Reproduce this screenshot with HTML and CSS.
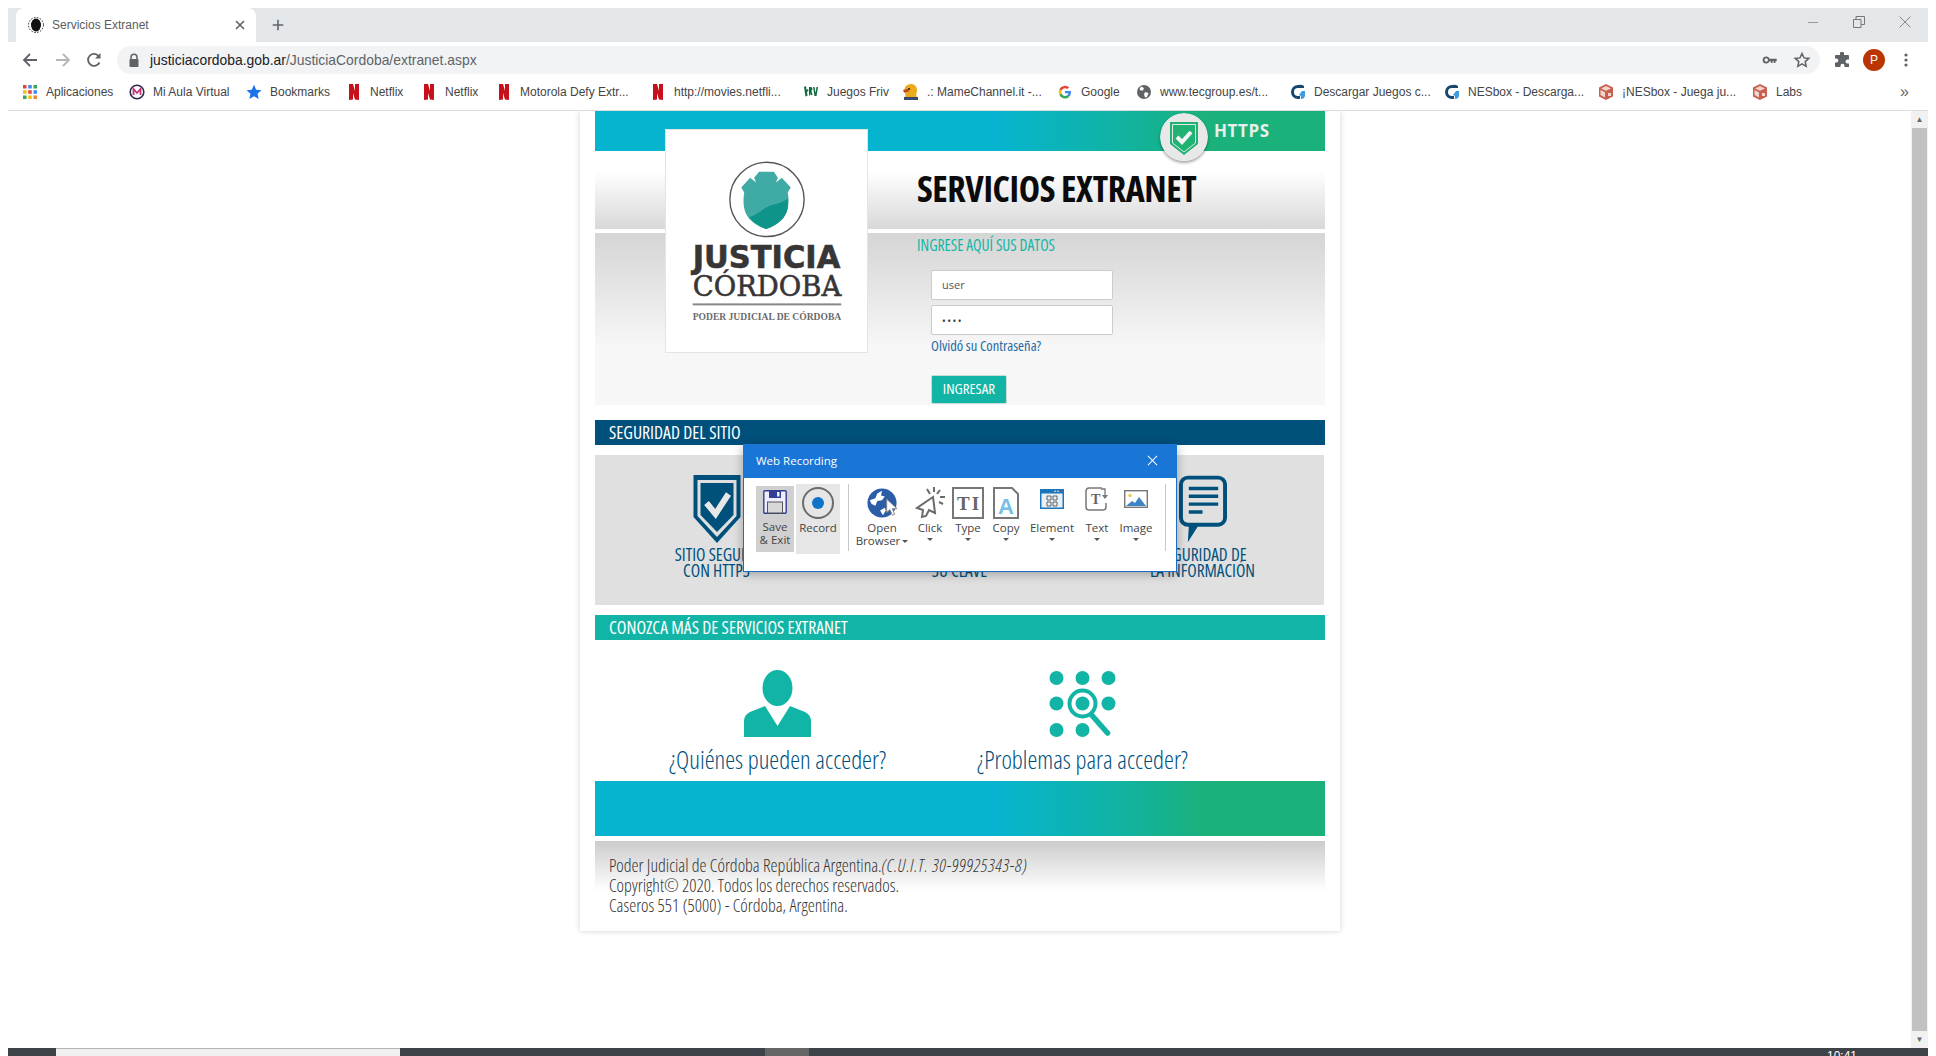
FILE: index.html
```html
<!DOCTYPE html>
<html lang="en">
<head>
    <meta charset="UTF-8">
    <title>Servicios Extranet</title>
    <link rel="stylesheet" href="styles.css">
</head>
<body>
    <svg class="defs" width="0" height="0">
        <symbol id="nflx" viewBox="0 0 16 16"><path fill="#c8101a" d="M3 0h4l2 7V0h4v16l-4-.5L7 9v6.5L3 16z"/></symbol>
        <symbol id="cube" viewBox="0 0 16 16"><path fill="#c9604f" d="M8 0l7 3.5v9L8 16l-7-3.5v-9z"/><path fill="#f2d5cc" d="M8 2l5 2.4-5 2.4-5-2.4zM2.5 6l4.5 2.2v5.3L2.5 11zM10 9h3v3h-3z"/></symbol>
        <symbol id="nes" viewBox="0 0 16 16"><path fill="#17476f" d="M8 1a7 7 0 0 0 0 14h2v-3H8a4 4 0 0 1 0-8h6V2a7 7 0 0 0-6-1z"/><path fill="#3d9be0" d="M15 7v5a4 4 0 0 1-4 3v-3l-2-1 3-4z"/></symbol>
    </svg>

    <div class="tabstrip">
        <div class="tab">
            <svg class="favicon" viewBox="0 0 16 16"><circle cx="8" cy="8" r="7.5" fill="none" stroke="#222" stroke-dasharray="1.5 1.5"/><ellipse cx="8" cy="8" rx="5" ry="6.5" fill="#111"/></svg>
            <span class="tab-title">Servicios Extranet</span>
            <svg class="tab-close" viewBox="0 0 10 10"><path d="M1 1l8 8M9 1l-8 8" stroke="#5f6368" stroke-width="1.6"/></svg>
        </div>
        <svg class="new-tab" viewBox="0 0 16 16"><path d="M8 2v12M2 8h12" stroke="#5f6368" stroke-width="1.8"/></svg>
        <div class="win-controls">
            <div class="win-btn"><svg viewBox="0 0 12 12"><path d="M1 6.5h10" stroke="#999" stroke-width="1"/></svg></div>
            <div class="win-btn"><svg viewBox="0 0 12 12"><path d="M.5 3.5h7.500v8h-7.500zM3 3.500v-3h8.500v8h-3.500" fill="none" stroke="#777" stroke-width="1"/></svg></div>
            <div class="win-btn"><svg viewBox="0 0 12 12"><path d="M.5.5l11 11M11.500.5l-11 11" stroke="#888" stroke-width="1"/></svg></div>
        </div>
    </div>

    <div class="toolbar">
        <div class="nav-btn"><svg viewBox="0 0 16 16"><path d="M15 8H2M8 2L2 8l6 6" fill="none" stroke="#5f6368" stroke-width="1.800"/></svg></div>
        <div class="nav-btn"><svg viewBox="0 0 16 16"><path d="M1 8h13M8 2l6 6-6 6" fill="none" stroke="#b4b6b9" stroke-width="1.800"/></svg></div>
        <div class="nav-btn"><svg viewBox="0 0 16 16"><path d="M13.500 10.500A6 6 0 1 1 13 4.500" fill="none" stroke="#5f6368" stroke-width="1.800"/><path d="M14.500 1v5.500H9z" fill="#5f6368"/></svg></div>
        <div class="omnibox">
            <svg class="lock" viewBox="0 0 14 14"><path d="M4 6V4.200a3 3 0 0 1 6 0V6" fill="none" stroke="#5f6368" stroke-width="1.500"/><rect x="2.500" y="6" width="9" height="8" rx="1" fill="#5f6368"/></svg>
            <span class="url"><span class="url-host">justiciacordoba.gob.ar</span>/JusticiaCordoba/extranet.aspx</span>
            <div class="omni-icons">
                <svg class="key-icon" viewBox="0 0 18 12"><circle cx="4.500" cy="6" r="3.200" fill="none" stroke="#5f6368" stroke-width="2.200"/><path d="M8 4.500h9v3h-1.500v2h-2v-2H12v2h-2v-2H8z" fill="#5f6368"/></svg>
                <svg viewBox="0 0 16 16"><path d="M8 1.500l2 4.400 4.800.5-3.600 3.200 1 4.700L8 11.900l-4.200 2.400 1-4.700L1.200 6.400 6 5.900z" fill="none" stroke="#5f6368" stroke-width="1.500"/></svg>
            </div>
        </div>
        <div class="tool-btn"><svg viewBox="0 0 16 16"><path fill="#5f6368" d="M6 1.500a2 2 0 0 1 4 0V3h4a1 1 0 0 1 1 1v3.500h-1.500a2 2 0 0 0 0 4H15V15H10.500v-1.300a2 2 0 0 0-4 0V15H2a1 1 0 0 1-1-1v-3.500h1.300a2 2 0 0 0 0-4H1V4a1 1 0 0 1 1-1h4z"/></svg></div>
        <div class="tool-btn"><span class="avatar">P</span></div>
        <div class="tool-btn"><svg viewBox="0 0 16 16"><circle cx="8" cy="3" r="1.600" fill="#5f6368"/><circle cx="8" cy="8" r="1.600" fill="#5f6368"/><circle cx="8" cy="13" r="1.600" fill="#5f6368"/></svg></div>
    </div>

    <div class="bookmarks">
        <div class="bm">
            <svg viewBox="0 0 16 16"><g><rect x="1" y="1" width="3.500" height="3.500" fill="#ea4335"/><rect x="6.250" y="1" width="3.500" height="3.500" fill="#4285f4"/><rect x="11.500" y="1" width="3.500" height="3.500" fill="#34a853"/><rect x="1" y="6.250" width="3.500" height="3.500" fill="#fbbc05"/><rect x="6.250" y="6.250" width="3.500" height="3.500" fill="#ea4335"/><rect x="11.500" y="6.250" width="3.500" height="3.500" fill="#4285f4"/><rect x="1" y="11.500" width="3.500" height="3.500" fill="#34a853"/><rect x="6.250" y="11.500" width="3.500" height="3.500" fill="#fbbc05"/><rect x="11.500" y="11.500" width="3.500" height="3.500" fill="#ea8a35"/></g></svg>
            <span>Aplicaciones</span>
        </div>
        <div class="bm">
            <svg viewBox="0 0 16 16"><circle cx="8" cy="8" r="6.800" fill="#fff" stroke="#2c2c4a" stroke-width="1.600"/><path d="M4.500 11V5l3.500 4 3.500-4v6" fill="none" stroke="#c2357a" stroke-width="1.800"/></svg>
            <span>Mi Aula Virtual</span>
        </div>
        <div class="bm">
            <svg viewBox="0 0 16 16"><path fill="#1a73e8" d="M8 .8l2.200 4.900 5.300.6-4 3.500 1.200 5.300L8 12.300l-4.700 2.800 1.200-5.300-4-3.500 5.300-.6z"/></svg>
            <span>Bookmarks</span>
        </div>
        <div class="bm"><svg viewBox="0 0 16 16"><use href="#nflx"/></svg><span>Netflix</span></div>
        <div class="bm"><svg viewBox="0 0 16 16"><use href="#nflx"/></svg><span>Netflix</span></div>
        <div class="bm"><svg viewBox="0 0 16 16"><use href="#nflx"/></svg><span>Motorola Defy Extr...</span></div>
        <div class="bm"><svg viewBox="0 0 16 16"><use href="#nflx"/></svg><span>http://movies.netfli...</span></div>
        <div class="bm">
            <svg viewBox="0 0 16 16"><path d="M1 3l2-1 .5 4L5 5l.5 2-1.500.8.500 4-2 .7zM6 3h2.500l1 2-1 2 1 4H7.500L7 8v3.500H6zM10 3h1.500l1 6 1-6H15l-1.500 9h-2z" fill="#0d6b3b"/></svg>
            <span>Juegos Friv</span>
        </div>
        <div class="bm">
            <svg viewBox="0 0 16 16"><path fill="#eba91c" d="M8 0c3.500 0 6 2.500 6 6 0 2-.5 3.500-1 4.500l1 3H2l.5-3C1 8 1 5.500 2 3.500 3 1.500 5.500 0 8 0z"/><path fill="#3a4a70" d="M1 13h14v3H1z"/><circle cx="6" cy="5" r="1.100" fill="#222"/><path fill="#c8401a" d="M0 6l5-1 1 2.500-5 1z"/></svg>
            <span>.: MameChannel.it -...</span>
        </div>
        <div class="bm">
            <svg viewBox="-2 -2 20 20"><path fill="#4285f4" d="M15.500 8.200c0-.6 0-1-.1-1.500H8v2.900h4.300c-.2 1-.8 1.800-1.600 2.400l2.500 1.900c1.400-1.400 2.300-3.300 2.300-5.700z"/><path fill="#34a853" d="M8 16c2.100 0 3.900-.7 5.200-1.900l-2.500-2c-.7.500-1.600.8-2.700.8-2.100 0-3.800-1.400-4.400-3.300L1 11.600C2.300 14.200 5 16 8 16z"/><path fill="#fbbc05" d="M3.600 9.600a4.800 4.800 0 0 1 0-3.100L1 4.400a8 8 0 0 0 0 7.200z"/><path fill="#ea4335" d="M8 3.200c1.200 0 2.200.4 3 1.200l2.200-2.200A8 8 0 0 0 1 4.400l2.600 2.100C4.200 4.600 5.900 3.200 8 3.200z"/></svg>
            <span>Google</span>
        </div>
        <div class="bm">
            <svg viewBox="0 0 16 16"><circle cx="8" cy="8" r="7" fill="#5f6368"/><path fill="#fff" d="M5 2.500l3 1.500-1 2.500H4.500L3.500 5zM9 8l3.500 1-1.500 4-2 .5-1-3z"/></svg>
            <span>www.tecgroup.es/t...</span>
        </div>
        <div class="bm"><svg viewBox="0 0 16 16"><use href="#nes"/></svg><span>Descargar Juegos c...</span></div>
        <div class="bm"><svg viewBox="0 0 16 16"><use href="#nes"/></svg><span>NESbox - Descarga...</span></div>
        <div class="bm"><svg viewBox="0 0 16 16"><use href="#cube"/></svg><span>¡NESbox - Juega ju...</span></div>
        <div class="bm"><svg viewBox="0 0 16 16"><use href="#cube"/></svg><span>Labs</span></div>
        <div class="bm-more">»</div>
    </div>

    <div class="viewport">
        <div class="page">
            <div class="card">
                <div class="top-bar">
                    <div class="https-badge">
                        <svg viewBox="0 0 48 48"><circle cx="24" cy="24" r="24" fill="#e8e8e8"/><path d="M10 9h28v22L24 42 10 31z" fill="#1fb273"/><path d="M12.500 11.500h23v18.500L24 39 12.500 30z" fill="none" stroke="#e8e8e8" stroke-width="1"/><path d="M17 24l5 5 9-10" fill="none" stroke="#f4f4f4" stroke-width="4"/></svg>
                        <span>HTTPS</span>
                    </div>
                </div>

                <div class="logo-box">
                    <svg viewBox="0 0 203 224">
                        <circle cx="102" cy="70" r="37.500" fill="#fff" stroke="#555" stroke-width="1.400"/>
                        <path fill="#40aaa5" d="M94 42h15l4 6-2 5 6-5 9 10-3 5c1 6 1 11 0 16-2 10-10 17-22 21-12-4-20-11-22-21-1-5-1-10 0-16l-3-5 9-10 6 5-2-5z"/>
                        <path fill="#0e9488" d="M84 88c8-2 14-9 22-12 7-2 12-3 17-7v10c-2 10-10 17-22 21-7-3-13-7-17-12z"/>
                        <text class="logo-main" x="27" y="139" textLength="149" lengthAdjust="spacingAndGlyphs">JUSTICIA</text>
                        <text class="logo-sub" x="27" y="168" textLength="150" lengthAdjust="spacingAndGlyphs">CÓRDOBA</text>
                        <rect x="27" y="175" width="150" height="2" fill="#888"/>
                        <text class="logo-small" x="27" y="192" textLength="150" lengthAdjust="spacingAndGlyphs">PODER JUDICIAL DE CÓRDOBA</text>
                    </svg>
                </div>

                <div class="hero-title">
                    <h1>SERVICIOS EXTRANET</h1>
                </div>
                <div class="hero-form">
                    <h2>INGRESE AQUÍ SUS DATOS</h2>
                    <div class="fields">
                        <div class="field">user</div>
                        <div class="field field-pass">••••</div>
                        <a class="forgot" href="#">Olvidó su Contraseña?</a>
                        <a class="btn-login" href="#">INGRESAR</a>
                    </div>
                </div>

                <div class="section-head head-blue">SEGURIDAD DEL SITIO</div>
                <div class="safety">
                    <div class="safety-item">
                        <svg viewBox="0 0 47 68"><path fill="#00507c" d="M0 0h47v42L23.500 68 0 42z"/><path fill="#e0e0e0" d="M4 5h39v36L23.500 62 4 41z"/><path fill="#00507c" d="M7 8h33v32L23.500 57 7 40z"/><path d="M13 28l9 11 13-20" fill="none" stroke="#e8e8e8" stroke-width="6"/></svg>
                        <p>SITIO SEGURO<br>CON HTTPS</p>
                    </div>
                    <div class="safety-item">
                        <svg viewBox="0 0 47 68"></svg>
                        <p>CAMBIE<br>SU CLAVE</p>
                    </div>
                    <div class="safety-item">
                        <svg viewBox="0 0 49 68"><path fill="#00507c" d="M9 0h31a9 9 0 0 1 9 9v34a9 9 0 0 1-9 9H19L9 68l1-16a9 9 0 0 1-10-9V9a9 9 0 0 1 9-9z"/><path fill="#e0e0e0" d="M9 4h31a5 5 0 0 1 5 5v34a5 5 0 0 1-5 5H9a5 5 0 0 1-5-5V9a5 5 0 0 1 5-5z"/><path d="M10 13h30M10 21h30M10 29h30M10 37h14" stroke="#00507c" stroke-width="3.500"/></svg>
                        <p>SEGURIDAD DE<br>LA INFORMACIÓN</p>
                    </div>
                </div>

                <div class="section-head head-teal">CONOZCA MÁS DE SERVICIOS EXTRANET</div>
                <div class="more">
                    <a class="more-item" href="#">
                        <svg viewBox="0 0 67 67"><ellipse cx="33.500" cy="18" rx="15" ry="18" fill="#12b5a5"/><path fill="#12b5a5" d="M21 36l12.500 20L46 36l15 6c4 2 6 5 6 9v16H0V51c0-4 2-7 6-9z"/></svg>
                        <span>¿Quiénes pueden acceder?</span>
                    </a>
                    <a class="more-item" href="#">
                        <svg viewBox="0 0 66 67"><g fill="#12b5a5"><ellipse cx="7" cy="8" rx="7" ry="7"/><ellipse cx="33" cy="8" rx="7" ry="7"/><ellipse cx="59" cy="8" rx="7" ry="7"/><ellipse cx="7" cy="33.500" rx="7" ry="7"/><ellipse cx="33" cy="33.500" rx="7" ry="7"/><ellipse cx="59" cy="33.500" rx="7" ry="7"/><ellipse cx="7" cy="60" rx="7" ry="7"/><ellipse cx="33" cy="60" rx="7" ry="7"/></g><circle cx="33" cy="33.500" r="13" fill="none" stroke="#12b5a5" stroke-width="4"/><path d="M43 46l15 17" stroke="#12b5a5" stroke-width="5.500" stroke-linecap="round"/></svg>
                        <span>¿Problemas para acceder?</span>
                    </a>
                </div>

                <div class="bottom-bar"></div>
                <div class="site-foot">
                    <p>Poder Judicial de Córdoba República Argentina.<em>(C.U.I.T. 30-99925343-8)</em></p>
                    <p>Copyright© 2020. Todos los derechos reservados.</p>
                    <p>Caseros 551 (5000) - Córdoba, Argentina.</p>
                </div>
            </div>
        </div>

        <div class="scrollbar">
            <div class="sb-arrow">▲</div>
            <div class="sb-thumb"></div>
            <div class="sb-arrow">▼</div>
        </div>

        <div class="recorder">
            <div class="rec-title">
                <span>Web Recording</span>
                <svg viewBox="0 0 12 12"><path d="M1 1l10 10M11 1L1 11" stroke="#fff" stroke-width="1.100"/></svg>
            </div>
            <div class="rec-body">
                <div class="rec-btn rec-save">
                    <svg class="ico-save" viewBox="0 0 24 24"><rect x=".8" y=".8" width="22.400" height="22.400" rx="1" fill="#eef" stroke="#333f92" stroke-width="1.400"/><path d="M6 1h12v7H6z" fill="#333f92"/><rect x="14" y="2" width="2.500" height="4.500" fill="#eee"/><rect x="4.500" y="12" width="15" height="11" fill="#d8d8d8" stroke="#555" stroke-width="1"/></svg>
                    <span>Save<br>&amp; Exit</span>
                </div>
                <div class="rec-btn rec-record">
                    <svg class="ico-rec" viewBox="0 0 32 32"><circle cx="16" cy="16" r="15" fill="none" stroke="#6b6b6b" stroke-width="2"/><circle cx="16" cy="16" r="6" fill="#0f74c8"/></svg>
                    <span>Record</span>
                </div>
                <div class="rec-sep"></div>
                <div class="rec-tool tool-open">
                    <svg class="ico-lg" viewBox="-1 0 34 32"><circle cx="16" cy="16" r="15.500" fill="#2b5ea7"/><path fill="#fff" d="M3 13l6-2 2-5 5-3-1 5 4 1-3 4-5 1-2 5-4-2zM14 24l5-3 1 3-3 5z"/><path d="M21 12l0 14 3.500-3 2.500 6 2.500-1-2.500-6h5z" fill="#fff" stroke="#888" stroke-width="1"/></svg>
                    <span>Open<br>Browser<i class="caret caret-inline"></i></span>
                </div>
                <div class="rec-tool tool-click">
                    <svg class="ico-lg" viewBox="0 0 32 32"><path d="M19 10L3 21l6 2-1 7 4-1 3-6 6 3z" fill="#fff" stroke="#6a6a6a" stroke-width="2"/><path d="M20 0v5M26 3l-3 4M31 10h-5M29 17l-4-2M13 2l3 5" stroke="#6a6a6a" stroke-width="2"/></svg>
                    <span>Click</span><i class="caret"></i>
                </div>
                <div class="rec-tool tool-type">
                    <svg class="ico-lg" viewBox="0 0 32 32"><rect x="1" y="1" width="30" height="30" fill="#fff" stroke="#777" stroke-width="2"/><text class="ico-text" x="5" y="23">TI</text></svg>
                    <span>Type</span><i class="caret"></i>
                </div>
                <div class="rec-tool tool-copy">
                    <svg class="ico-copy" viewBox="0 0 26 32"><path d="M1 1h18l6 6v24H1z" fill="#fff" stroke="#777" stroke-width="2"/><text class="ico-a" x="5" y="27">A</text></svg>
                    <span>Copy</span><i class="caret"></i>
                </div>
                <div class="rec-tool tool-element">
                    <svg class="ico-el" viewBox="0 0 24 20"><rect width="24" height="20" fill="#1b75bb"/><rect x="1.500" y="4.500" width="21" height="14" fill="#e8f1f8"/><path d="M7 7h4v4H7zM13 7h4v4h-4zM7 13h4v4H7zM13 13h4v4h-4z" fill="none" stroke="#555" stroke-width=".9"/><circle cx="15" cy="2.300" r=".8" fill="#fff"/><circle cx="18" cy="2.300" r=".8" fill="#fff"/><circle cx="21" cy="2.300" r=".8" fill="#e33"/></svg>
                    <span>Element</span><i class="caret"></i>
                </div>
                <div class="rec-tool tool-text">
                    <svg class="ico-el" viewBox="0 0 24 24"><path d="M17 1H4a3 3 0 0 0-3 3v16a3 3 0 0 0 3 3h14a3 3 0 0 0 3-3v-4" fill="none" stroke="#777" stroke-width="1.500"/><path d="M16 2h4v6" fill="none" stroke="#777" stroke-width="1.300"/><path d="M17 8h6l-3 4z" fill="#777"/><text class="ico-t" x="6" y="17">T</text></svg>
                    <span>Text</span><i class="caret"></i>
                </div>
                <div class="rec-tool tool-image">
                    <svg class="ico-el" viewBox="0 0 24 18"><rect x=".7" y=".7" width="22.600" height="16.600" fill="#fff" stroke="#777" stroke-width="1.400"/><circle cx="6" cy="5.500" r="1.800" fill="#f0cf50"/><path d="M2 16l6-5 3 2 4-6 7 9z" fill="#3d85c6"/></svg>
                    <span>Image</span><i class="caret"></i>
                </div>
                <div class="rec-sep"></div>
            </div>
        </div>
    </div>

    <div class="taskbar">
        <div class="task-start"></div>
        <div class="task-search"></div>
        <div class="task-active"></div>
        <div class="task-clock">10:41</div>
    </div>
</body>
</html>
```

FILE: styles.css
```css
* {
    box-sizing: border-box;
}

html, body {
    height: 100%;
}

body {
    margin: 0;
    padding: 8px 8px 0 8px;
    height: 1056px;
    overflow: hidden;
    display: flex;
    flex-direction: column;
    background-color: #ffffff;
    font-family: "Liberation Sans", Arial, sans-serif;
}

.defs {
    position: absolute;
}

/* browser chrome */

.tabstrip {
    height: 34px;
    flex: none;
    display: flex;
    align-items: center;
    background-color: #e4e7ea;
}

.tab {
    height: 34px;
    width: 240px;
    margin-left: 8px;
    padding: 0 10px 0 12px;
    display: flex;
    align-items: center;
    gap: 8px;
    background-color: #ffffff;
    border-radius: 8px 8px 0 0;
}

.favicon {
    width: 16px;
    height: 16px;
}

.tab-title {
    flex: 1;
    font-size: 12px;
    color: #5a5d61;
}

.tab-close {
    width: 10px;
    height: 10px;
    margin-right: 1px;
}

.new-tab {
    width: 14px;
    height: 14px;
    margin-left: 15px;
}

.win-controls {
    margin-left: auto;
    display: flex;
    align-self: flex-start;
}

.win-btn {
    width: 46px;
    height: 28px;
    display: flex;
    align-items: center;
    justify-content: center;
}

.win-btn svg {
    width: 12px;
    height: 12px;
}

.toolbar {
    height: 35px;
    flex: none;
    padding: 4px 6px 3px 5px;
    display: flex;
    align-items: center;
}

.nav-btn {
    width: 33px;
    display: flex;
    justify-content: center;
}

.nav-btn:nth-child(3) {
    margin-left: -2px;
}

.nav-btn svg {
    width: 16px;
    height: 16px;
}

.omnibox {
    flex: 1;
    height: 28px;
    margin: 0 6px 0 7px;
    padding: 0 2px 0 10px;
    display: flex;
    align-items: center;
    background-color: #f1f3f4;
    border-radius: 14px;
}

.lock {
    width: 14px;
    height: 14px;
    margin-right: 9px;
}

.url {
    flex: 1;
    font-size: 13.900px;
    color: #5f6368;
}

.url-host {
    color: #202124;
}

.omni-icons {
    display: flex;
    align-items: center;
}

.omni-icons svg {
    width: 32px;
    height: 16px;
}

.omni-icons .key-icon {
    height: 10px;
}

.tool-btn {
    width: 32px;
    display: flex;
    justify-content: center;
}

.tool-btn svg {
    width: 16px;
    height: 16px;
}

.avatar {
    width: 22px;
    height: 22px;
    border-radius: 50%;
    background-color: #bb3503;
    color: #ffffff;
    font-size: 12px;
    line-height: 22px;
    text-align: center;
}

.bookmarks {
    height: 34px;
    flex: none;
    padding: 0 0 3px 14px;
    display: grid;
    grid-template-columns: 107px 117px 100px 75px 75px 154px 153px 100px 154px 79px 154px 154px 154px 154px 146px 1fr;
    align-items: center;
    border-bottom: 1px solid #dcdcdc;
    font-size: 12px;
    color: #444;
}

.bm {
    display: flex;
    align-items: center;
    gap: 8px;
    white-space: nowrap;
}

.bm svg {
    width: 16px;
    height: 16px;
    flex: none;
}

.bm-more {
    padding-left: 2px;
    font-size: 16px;
    line-height: 16px;
    color: #666;
}

.viewport {
    position: relative;
    flex: 1;
    min-height: 0;
    display: flex;
    overflow: hidden;
}

.scrollbar {
    width: 17px;
    flex: none;
    display: flex;
    flex-direction: column;
    background-color: #f1f1f1;
}

.sb-arrow {
    height: 17px;
    font-size: 8px;
    line-height: 17px;
    text-align: center;
    color: #666;
}

.sb-thumb {
    flex: 1;
    margin: 0 1px;
    background-color: #c1c1c1;
}

.taskbar {
    height: 8px;
    flex: none;
    display: flex;
    overflow: hidden;
    background-color: #3e4249;
}

.task-start {
    width: 48px;
}

.task-search {
    width: 344px;
    background-color: #f0f0f0;
    border-top: 1px solid #b5b5b5;
}

.task-active {
    width: 44px;
    margin-left: 365px;
    background-color: #666;
}

.task-clock {
    margin-left: 1018px;
    font-size: 12px;
    line-height: 14px;
    padding-top: 1px;
    color: #ffffff;
}

/* site */

.page {
    flex: 1;
    min-width: 0;
}

.card {
    position: relative;
    width: 760px;
    height: 820px;
    margin-left: 572px;
    padding: 0 15px;
    background-color: #ffffff;
    box-shadow: 0 0 6px rgba(0, 0, 0, 0.18);
    font-family: "Open Sans", "Liberation Sans", sans-serif;
    font-stretch: 75%;
}

.top-bar {
    position: relative;
    height: 40px;
    background: linear-gradient(90deg, #07b4cf 55%, #0fb3a8 70%, #1bb17a 84%);
}

.https-badge {
    position: absolute;
    left: 565px;
    top: 2px;
    display: flex;
    gap: 6px;
}

.https-badge svg {
    width: 48px;
    height: 48px;
    border-radius: 50%;
    box-shadow: 0 2px 3px rgba(0, 0, 0, 0.35);
}

.https-badge span {
    margin-top: 6px;
    font-family: "Open Sans", sans-serif;
    font-stretch: 100%;
    font-weight: 700;
    font-size: 17px;
    line-height: 24px;
    letter-spacing: 0.6px;
    color: #e6efea;
}

.logo-box {
    position: absolute;
    left: 85px;
    top: 18px;
    width: 203px;
    height: 224px;
    z-index: 1;
    background-color: #ffffff;
    border: 1px solid #e4e4e4;
}

.logo-box svg {
    display: block;
    width: 201px;
    height: 222px;
}

.logo-main {
    font: 700 32px "DejaVu Sans", sans-serif;
    fill: #373536;
    stroke: #373536;
    stroke-width: 0.6;
}

.logo-sub {
    font: 400 29px "DejaVu Serif", serif;
    fill: #373536;
    stroke: #373536;
    stroke-width: 0.6;
}

.logo-small {
    font: 700 10px "Liberation Serif", serif;
    fill: #6a6a6a;
}

.hero-title {
    height: 78px;
    padding: 17px 0 0 322px;
    background: linear-gradient(#ffffff 20px, #d8d8d8);
}

.hero-title h1 {
    margin: 0;
    font-size: 36px;
    line-height: 42px;
    font-weight: 700;
    letter-spacing: -0.4px;
    white-space: nowrap;
    color: #0b0b0b;
}

.hero-form {
    height: 172px;
    margin-top: 4px;
    padding: 3px 0 0 322px;
    background: linear-gradient(#d5d5d5, #f7f7f7 115px);
}

.hero-form h2 {
    margin: 0;
    font-size: 15.500px;
    line-height: 18px;
    font-weight: 400;
    white-space: nowrap;
    color: #12b5a5;
}

.fields {
    width: 182px;
    margin: 16px 0 0 14px;
}

.field {
    height: 30px;
    margin-bottom: 5px;
    padding: 0 10px;
    background-color: #ffffff;
    border: 1px solid #ccc;
    border-radius: 2px;
    font-stretch: 100%;
    font-size: 11px;
    line-height: 28px;
    color: #555;
}

.field-pass {
    font-size: 10px;
    line-height: 31px;
    letter-spacing: 1.500px;
    color: #333;
}

.forgot {
    display: block;
    height: 35px;
    font-size: 14.500px;
    line-height: 12px;
    color: #1f6aa5;
    text-decoration: none;
}

.btn-login {
    display: block;
    width: 76px;
    height: 29px;
    background-color: #12b5a5;
    border: 1px solid #c8dcd9;
    border-radius: 2px;
    font-size: 15px;
    line-height: 25px;
    text-align: center;
    color: #ffffff;
    text-decoration: none;
}

.section-head {
    height: 25px;
    padding-left: 14px;
    font-size: 17.700px;
    line-height: 25px;
    white-space: nowrap;
    color: #ffffff;
}

.head-blue {
    margin-top: 15px;
    background-color: #00507c;
}

.head-teal {
    margin-top: 10px;
    background-color: #12b5a5;
}

.safety {
    height: 150px;
    margin: 10px 1px 0 0;
    padding-top: 20px;
    display: grid;
    grid-template-columns: repeat(3, 1fr);
    background-color: #e0e0e0;
}

.safety-item {
    display: flex;
    flex-direction: column;
    align-items: center;
}

.safety-item svg {
    height: 68px;
    width: 48px;
}

.safety-item p {
    margin: 4px 0 0;
    font-size: 17.300px;
    line-height: 16px;
    text-align: center;
    color: #00507c;
}

.more {
    height: 141px;
    padding: 30px 0 0 30px;
    display: grid;
    grid-template-columns: 305px 305px;
}

.more-item {
    display: flex;
    flex-direction: column;
    align-items: center;
    text-decoration: none;
}

.more-item svg {
    width: 67px;
    height: 67px;
}

.more-item span {
    margin-top: 8px;
    font-size: 25px;
    font-weight: 300;
    line-height: 28px;
    color: #00507c;
}

.bottom-bar {
    height: 55px;
    background: linear-gradient(90deg, #07b4cf 55%, #0fb3a8 70%, #1bb17a 84%);
}

.site-foot {
    margin-top: 5px;
    padding: 14px 0 0 14px;
    height: 90px;
    background: linear-gradient(#cccccc, #ffffff 50px);
}

.site-foot p {
    margin: 0;
    font-size: 17.800px;
    font-weight: 300;
    line-height: 20px;
    color: #333;
}

.site-foot em {
    font-style: italic;
    letter-spacing: 0.8px;
}

/* recorder window */

.recorder {
    position: absolute;
    left: 735px;
    top: 333px;
    width: 434px;
    height: 128px;
    background-color: #ffffff;
    border: 1px solid #1a6fc4;
    border-top: none;
    box-shadow: 0 2px 10px rgba(0, 0, 0, 0.3);
    font-family: "Open Sans", sans-serif;
    font-size: 11.500px;
    line-height: 13px;
    color: #444;
}

.rec-title {
    height: 34px;
    margin: 0 -1px;
    padding: 0 19px 2px 13px;
    display: flex;
    align-items: center;
    justify-content: space-between;
    background-color: #1976d6;
    color: #ffffff;
}

.rec-title svg {
    width: 11px;
    height: 11px;
}

.rec-body {
    position: relative;
    height: 93px;
    padding: 6px 0 0 12px;
    display: flex;
    align-items: flex-start;
}

.rec-btn {
    display: flex;
    flex-direction: column;
    align-items: center;
    text-align: center;
}

.rec-save {
    width: 38px;
    height: 66px;
    margin-top: 2px;
    padding-top: 4px;
    background-color: #d0d0d0;
}

.rec-save span {
    margin-top: 6px;
}

.ico-save {
    width: 24px;
    height: 24px;
}

.rec-record {
    width: 44px;
    height: 70px;
    margin-left: 2px;
    padding-top: 3px;
    background-color: #e6e6e6;
}

.rec-record span {
    margin-top: 2px;
}

.ico-rec {
    width: 32px;
    height: 32px;
}

.rec-sep {
    width: 1px;
    height: 67px;
    margin: 0 0 0 8px;
    background-color: #c8c8c8;
}

.rec-tool {
    display: flex;
    flex-direction: column;
    align-items: center;
    height: 70px;
    padding-top: 3px;
    text-align: center;
}

.rec-tool > span {
    margin-top: 2px;
    white-space: nowrap;
}

.ico-lg {
    width: 32px;
    height: 32px;
    flex: none;
}

.ico-copy {
    width: 26px;
    height: 32px;
    flex: none;
}

.ico-el {
    width: 24px;
    height: 24px;
    flex: none;
    margin-bottom: 8px;
}

.ico-text {
    font: 700 19px "Liberation Serif", serif;
    letter-spacing: 2px;
    fill: #666;
}

.ico-a {
    font: 700 22px "Liberation Sans", sans-serif;
    fill: #78bfe8;
}

.ico-t {
    font: 700 14px "Liberation Serif", serif;
    fill: #666;
}

.tool-open { width: 54px; margin-left: 6px; }
.tool-click { width: 36px; margin-left: 3px; }
.tool-type { width: 38px; margin-left: 1px; }
.tool-copy { width: 38px; }
.tool-element { width: 54px; }
.tool-text { width: 36px; }
.tool-image { width: 42px; }

.caret {
    display: block;
    width: 0;
    height: 0;
    margin-top: 4px;
    border-left: 3px solid transparent;
    border-right: 3px solid transparent;
    border-top: 3px solid #555;
}

.caret-inline {
    display: inline-block;
    margin: 0 0 2px 2px;
}
```
